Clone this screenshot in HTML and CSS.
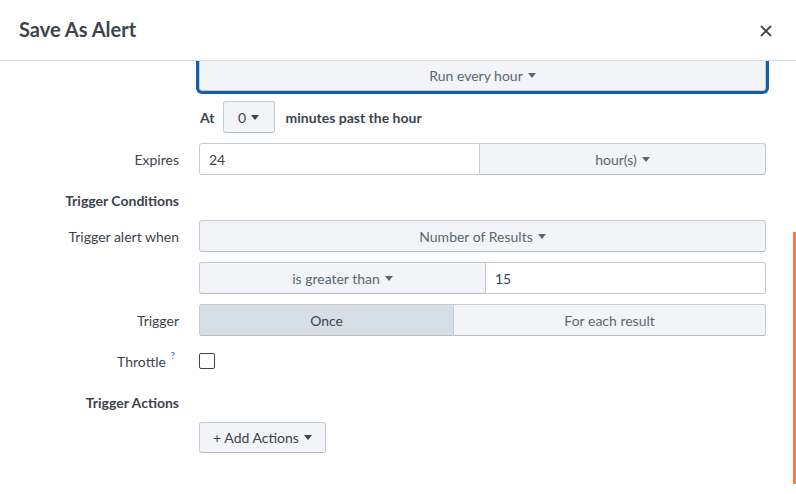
FILE: index.html
```html
<!DOCTYPE html>
<html>
<head>
<meta charset="utf-8">
<link rel="stylesheet" href="styles.css">
</head>
<body>
<div class="dialog">
  <header class="hd">
    <h1 class="title">Save As Alert</h1>
    <button class="close" aria-label="Close">
      <svg width="12" height="12" viewBox="0 0 12 12"><path d="M1 1 L11 11 M11 1 L1 11" stroke="#3c444d" stroke-width="1.8" fill="none"/></svg>
    </button>
  </header>
  <div class="bd">
    <div class="row first">
      <div class="label"></div>
      <div class="ctl"><button class="btn grow focus">Run every hour <span class="caret"></span></button></div>
    </div>
    <div class="row">
      <div class="label"></div>
      <div class="ctl at">
        <span class="strong">At</span>
        <button class="btn small">0 <span class="caret"></span></button>
        <span class="strong">minutes past the hour</span>
      </div>
    </div>
    <div class="row">
      <div class="label">Expires</div>
      <div class="ctl group">
        <div class="input half">24</div>
        <button class="btn half">hour(s) <span class="caret"></span></button>
      </div>
    </div>
    <div class="row heading">
      <div class="label strong">Trigger Conditions</div>
    </div>
    <div class="row">
      <div class="label">Trigger alert when</div>
      <div class="ctl"><button class="btn grow">Number of Results <span class="caret"></span></button></div>
    </div>
    <div class="row">
      <div class="label"></div>
      <div class="ctl group">
        <button class="btn half">is greater than <span class="caret"></span></button>
        <div class="input half">15</div>
      </div>
    </div>
    <div class="row">
      <div class="label">Trigger</div>
      <div class="ctl group">
        <button class="btn auto active">Once</button>
        <button class="btn auto">For each result</button>
      </div>
    </div>
    <div class="row throttle">
      <div class="label">Throttle <sup class="help">?</sup></div>
      <div class="ctl"><span class="checkbox"></span></div>
    </div>
    <div class="row heading last">
      <div class="label strong">Trigger Actions</div>
    </div>
    <div class="row">
      <div class="label"></div>
      <div class="ctl"><button class="btn add">+ Add Actions <span class="caret"></span></button></div>
    </div>
  </div>
  <div class="scroll-ind"></div>
</div>
</body>
</html>
```
FILE: styles.css
```css
* { box-sizing: border-box; }
html, body { margin: 0; padding: 0; }
body {
  width: 796px;
  height: 494px;
  overflow: hidden;
  background: #fff;
  font-family: Lato, "Open Sans", sans-serif;
  font-size: 14px;
  color: #3c444d;
}
.dialog {
  position: relative;
  width: 796px;
  height: 494px;
  display: flex;
  flex-direction: column;
}
.hd {
  height: 61px;
  flex: none;
  border-bottom: 1px solid #d8dde3;
  display: flex;
  align-items: center;
  justify-content: space-between;
  padding: 0 24px 0 19px;
}
.title {
  margin: 0;
  font-size: 20px;
  font-weight: 700;
  color: #3c444d;
  padding-bottom: 3px;
}
.close {
  border: none;
  background: none;
  padding: 0;
  width: 12px;
  height: 12px;
  display: flex;
  margin-top: 1px;
}
.bd {
  flex: 1;
  overflow: hidden;
}
.row {
  display: flex;
  align-items: center;
  height: 32px;
  margin-bottom: 10px;
}
.row.first { margin-top: -2px; }
.row.throttle { margin-top: -1px; }
.row.heading { margin-top: -1px; margin-bottom: 4px; }
.row.heading.last { margin-bottom: 3px; }
.label {
  width: 179px;
  flex: none;
  text-align: right;
  margin-right: 20px;
  white-space: nowrap;
}
.strong { font-weight: 700; }
.ctl {
  width: 567px;
  flex: none;
  display: flex;
  align-items: center;
}
.btn {
  font-family: inherit;
  font-size: 14px;
  color: #5c6773;
  background: #f2f4f7;
  border: 1px solid #c3cbd4;
  border-bottom-color: #b5bec8;
  border-radius: 3px;
  height: 32px;
  padding: 0 12px;
  display: inline-flex;
  align-items: center;
  justify-content: center;
  white-space: nowrap;
}
.btn.grow { flex: 1; }
.btn.focus {
  box-shadow: 0 0 0 3px #135fa8;
  border-color: #c3cbd4;
}
.caret {
  display: inline-block;
  width: 0;
  height: 0;
  border-left: 4px solid transparent;
  border-right: 4px solid transparent;
  border-top: 5px solid currentColor;
  margin-left: 5px;
  margin-top: 1px;
}
.at .strong:first-child { margin-left: 1px; margin-right: 8px; }
.btn.small { width: 52px; margin-right: 11px; color: #3c444d; }
.group { display: flex; }
.half { flex: 1 1 0; }
.auto { flex: 1 1 auto; }
.input {
  height: 32px;
  border: 1px solid #c3cbd4;
  border-radius: 3px;
  background: #fff;
  padding: 0 9px;
  display: flex;
  align-items: center;
  color: #3c444d;
}
.group > :first-child { border-top-right-radius: 0; border-bottom-right-radius: 0; }
.group > :last-child { border-top-left-radius: 0; border-bottom-left-radius: 0; border-left: none; }
.btn.active {
  background: #d8dee6;
  color: #3c444d;
}
.help {
  color: #1a7bc9;
  font-size: 10px;
  vertical-align: top;
  position: relative;
  top: -4px;
  margin-left: 1px;
  margin-right: 4px;
}
.checkbox {
  width: 16px;
  height: 16px;
  border: 1px solid #3c444d;
  border-radius: 2px;
  display: inline-block;
}
.btn.add { width: 127px; height: 31px; color: #3c444d; }
.scroll-ind {
  position: absolute;
  right: 0;
  top: 232px;
  width: 3px;
  height: 252px;
  background: #fc7a4a;
}
```
